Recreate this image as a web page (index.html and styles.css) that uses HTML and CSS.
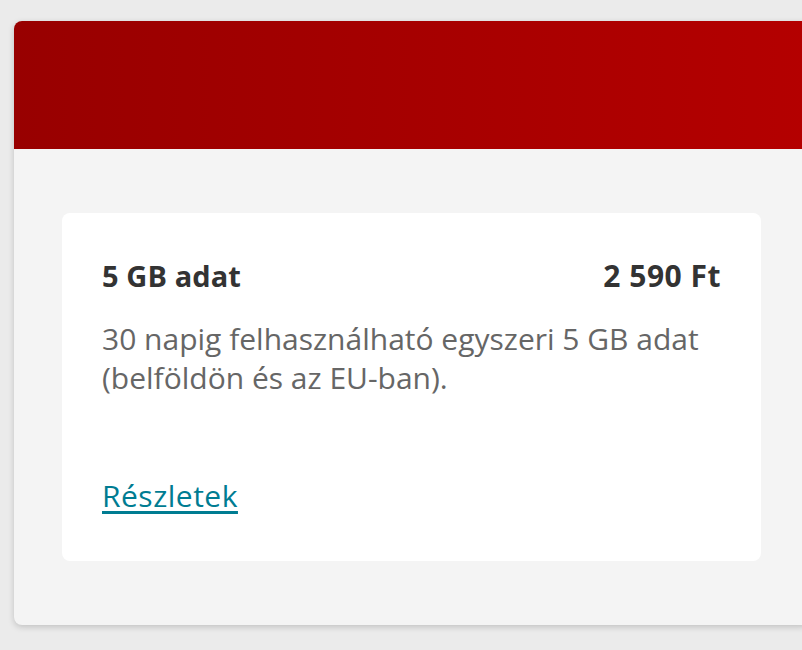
FILE: index.html
```html
<!DOCTYPE html>
<html lang="hu">
<head>
<meta charset="utf-8">
<link rel="stylesheet" href="styles.css">
</head>
<body>
<div class="tile">
  <div class="tile-header"></div>
  <div class="tile-body">
    <div class="offer">
      <div class="offer-top">
        <span class="offer-title">5 GB adat</span>
        <span class="offer-price">2 590 Ft</span>
      </div>
      <p class="offer-desc">30 napig felhasználható egyszeri 5 GB adat (belföldön és az EU-ban).</p>
      <a class="offer-link" href="#">Részletek</a>
    </div>
  </div>
</div>
</body>
</html>
```
FILE: styles.css
```css
html, body {
  margin: 0;
  padding: 0;
  overflow: hidden;
}
body {
  background: #ebebeb;
  font-family: "Open Sans", "Noto Sans", sans-serif;
  padding: 21px 0 0 14px;
  height: 650px;
  box-sizing: border-box;
}
.tile {
  width: 795px;
  border-radius: 8px;
  overflow: hidden;
  background: #f4f4f4;
  box-shadow: 0 2px 6px rgba(0, 0, 0, 0.18);
}
.tile-header {
  height: 128px;
  background: linear-gradient(90deg, #980000 0%, #b40000 100%);
}
.tile-body {
  padding: 64px 48px;
}
.offer {
  background: #ffffff;
  border-radius: 8px;
  padding: 40px 40px 46px;
  height: 348px;
  box-sizing: border-box;
  display: flex;
  flex-direction: column;
}
.offer-top {
  display: flex;
  justify-content: space-between;
  align-items: baseline;
  font-size: 29px;
  font-weight: 700;
  color: #333333;
  line-height: 46px;
}
.offer-title {
  letter-spacing: 0.1px;
}
.offer-price {
  font-size: 30px;
  letter-spacing: 0.5px;
}
.offer-desc {
  margin: 20px 0 0;
  font-size: 30px;
  line-height: 39px;
  color: #666666;
}
.offer-link {
  margin-top: auto;
  font-size: 30px;
  line-height: 39px;
  color: #007c92;
  text-decoration: underline;
  text-underline-offset: 4px;
  text-decoration-thickness: 2.5px;
  align-self: flex-start;
  letter-spacing: 0.5px;
}
```
